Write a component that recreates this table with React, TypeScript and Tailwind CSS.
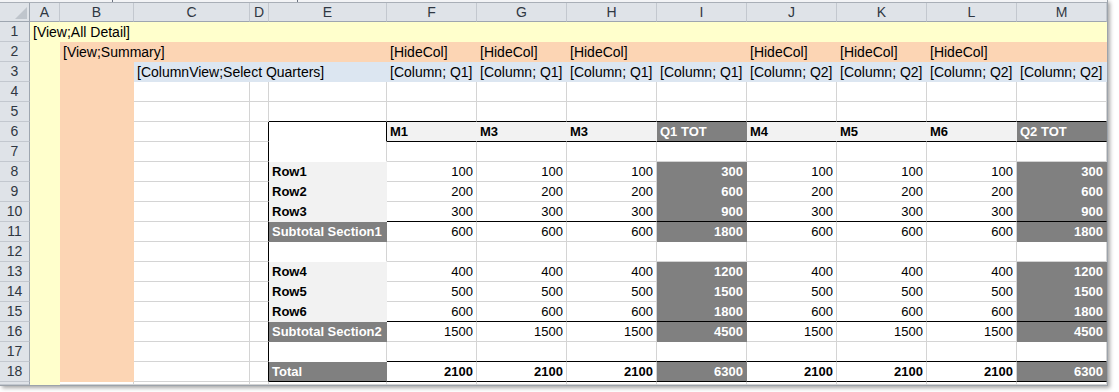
import React from "react";

type FillKey = "yel" | "org" | "blu" | "lgr" | "dgr" | "wht";

const fills: Record<FillKey, { bg: string; r: string; b: string }> = {
  yel: { bg: "bg-[#FFFFCC]", r: "border-r-[#FFFFCC]", b: "border-b-[#FFFFCC]" },
  org: { bg: "bg-[#FCD5B4]", r: "border-r-[#FCD5B4]", b: "border-b-[#FCD5B4]" },
  blu: { bg: "bg-[#DCE6F1]", r: "border-r-[#DCE6F1]", b: "border-b-[#DCE6F1]" },
  lgr: { bg: "bg-[#F2F2F2]", r: "border-r-[#F2F2F2]", b: "border-b-[#F2F2F2]" },
  dgr: { bg: "bg-[#808080]", r: "border-r-[#808080]", b: "border-b-[#808080]" },
  wht: { bg: "bg-white", r: "border-r-white", b: "border-b-white" },
};

type Cell = {
  span?: number;
  fill?: FillKey;
  text?: string;
  bold?: boolean;
  num?: boolean;
  light?: boolean;
  blackB?: boolean;
  blackR?: boolean;
  gridR?: boolean;
};

const letters = ["A", "B", "C", "D", "E", "F", "G", "H", "I", "J", "K", "L", "M"];

// month columns F..M, with the quarter totals in I and M
const monthHead = ["M1", "M3", "M3", "Q1 TOT", "M4", "M5", "M6", "Q2 TOT"];
const isTot = (i: number) => i === 3 || i === 7;

const dataRows: Record<number, { label: string; kind: "row" | "sub" | "total"; m: number; q: number }> = {
  8: { label: "Row1", kind: "row", m: 100, q: 300 },
  9: { label: "Row2", kind: "row", m: 200, q: 600 },
  10: { label: "Row3", kind: "row", m: 300, q: 900 },
  11: { label: "Subtotal Section1", kind: "sub", m: 600, q: 1800 },
  13: { label: "Row4", kind: "row", m: 400, q: 1200 },
  14: { label: "Row5", kind: "row", m: 500, q: 1500 },
  15: { label: "Row6", kind: "row", m: 600, q: 1800 },
  16: { label: "Subtotal Section2", kind: "sub", m: 1500, q: 4500 },
  18: { label: "Total", kind: "total", m: 2100, q: 6300 },
};

const lineBelow = [10, 15, 17, 18];

function buildRow(r: number): Cell[] {
  if (r === 1) return [{ span: 13, fill: "yel", text: "[View;All Detail]" }];
  if (r === 2) {
    const out: Cell[] = [{ fill: "yel" }, { span: 4, fill: "org", text: "[View;Summary]" }];
    for (let i = 0; i < 8; i++) out.push({ fill: "org", text: isTot(i) ? undefined : "[HideCol]" });
    return out;
  }
  if (r === 3) {
    const out: Cell[] = [{ fill: "yel" }, { fill: "org" }, { span: 3, fill: "blu", text: "[ColumnView;Select Quarters]" }];
    for (let i = 0; i < 8; i++) out.push({ fill: "blu", text: i < 4 ? "[Column; Q1]" : "[Column; Q2]" });
    return out;
  }
  if (r === 19) return [{ fill: "yel" }, ...Array.from({ length: 12 }, () => ({} as Cell))];

  const out: Cell[] = [{ fill: "yel" }, { fill: "org" }, {}, { blackR: r >= 6 }];
  const d = dataRows[r];

  // label column E
  if (r === 5) out.push({ blackB: true });
  else if (r === 6) out.push({ fill: "wht", blackR: true });
  else if (d) out.push({ fill: d.kind === "row" ? "lgr" : "dgr", text: d.label, bold: true, light: d.kind !== "row", blackB: r === 18 });
  else if (r >= 7) out.push({ fill: "wht", gridR: true });
  else out.push({});

  for (let i = 0; i < 8; i++) {
    const tot = isTot(i);
    if (r === 5) out.push({ blackB: true });
    else if (r === 6) out.push({ fill: tot ? "dgr" : "lgr", text: monthHead[i], bold: true, light: tot, blackB: true });
    else if (d)
      out.push({
        fill: tot ? "dgr" : undefined,
        text: String(tot ? d.q : d.m),
        num: true,
        bold: tot || d.kind === "total",
        light: tot,
        blackB: lineBelow.includes(r),
      });
    else out.push({ blackB: lineBelow.includes(r) });
  }
  return out;
}

function SheetCell({ c, short }: { c: Cell; short?: boolean }) {
  const f = c.fill ? fills[c.fill] : null;
  const rColor = c.blackR ? "border-r-black" : c.gridR || !f ? "border-r-[#D4D4D4]" : f.r;
  const bColor = c.blackB ? "border-b-black" : f ? f.b : "border-b-[#D4D4D4]";
  const span =
    c.span === 13 ? "col-span-13" : c.span === 4 ? "col-span-4" : c.span === 3 ? "col-span-3" : "";
  const size = c.num || c.bold ? "text-[13px]" : "text-[14px]";
  return (
    <div
      className={`${short ? "h-[3px]" : "h-[20px]"} ${span} border-r border-b ${rColor} ${bColor} ${f ? f.bg : "bg-white"} flex items-end overflow-visible whitespace-nowrap px-[3px] ${size} leading-[18px] ${
        c.num ? "justify-end" : ""
      } ${c.bold ? "font-bold" : ""} ${c.light ? "text-white" : "text-black"}`}
    >
      {c.text}
    </div>
  );
}

export default function App() {
  const rows = Array.from({ length: 19 }, (_, i) => i + 1);
  return (
    <div className="w-[1119px] h-[392px] bg-white" style={{ fontFamily: '"Liberation Sans", Arial, sans-serif' }}>
      <div className="w-[1108px] border-r border-b border-[#9CA3AB] shadow-[2px_2px_4px_rgba(0,0,0,0.35)]">
        {/* strip left of the formula bar */}
        <div className="h-[3px] bg-[#F3F4F6] border-b border-[#A9AFB7] flex">
          <div className="w-[112px]" />
          <div className="w-px bg-[#6B7280]" />
          <div className="w-[184px]" />
          <div className="w-px bg-[#6B7280]" />
        </div>

        <div className="grid grid-cols-[30px_30px_74px_116px_19px_118px_repeat(8,90px)]">
          {/* column letters */}
          <div className="h-[19px] bg-[#DFE3E8] border-r border-b border-[#9EA6B0] relative overflow-hidden">
            <div className="absolute right-[2px] bottom-[2px] w-0 h-0 border-l-[12px] border-l-transparent border-b-[12px] border-b-[#BFC5CC]" />
          </div>
          {letters.map((l) => (
            <div
              key={l}
              className="h-[19px] bg-[#DFE3E8] border-r border-r-[#C3C8CF] border-b border-b-[#9EA6B0] flex items-center justify-center text-[14px] text-[#2F3742]"
            >
              {l}
            </div>
          ))}

          {rows.map((r) => (
            <React.Fragment key={r}>
              <div
                className={`${r === 19 ? "h-[3px]" : "h-[20px]"} bg-[#DFE3E8] border-r border-r-[#9EA6B0] border-b border-b-[#C3C8CF] flex items-center justify-center text-[14px] text-[#2F3742]`}
              >
                {r === 19 ? "" : r}
              </div>
              {buildRow(r).map((c, i) => (
                <SheetCell key={i} c={c} short={r === 19} />
              ))}
            </React.Fragment>
          ))}
        </div>
      </div>
    </div>
  );
}
